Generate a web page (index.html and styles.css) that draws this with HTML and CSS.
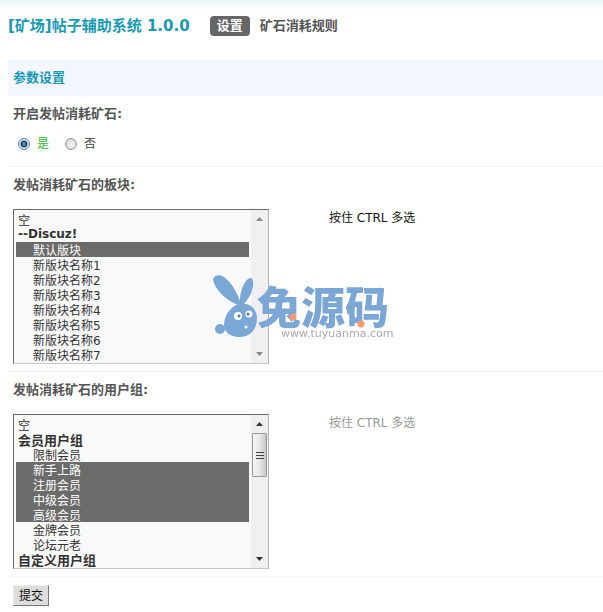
FILE: index.html
```html
<!DOCTYPE html>
<html lang="zh-CN">
<head>
<meta charset="utf-8">
<meta name="viewport" content="width=device-width, initial-scale=1">
<title>[矿场]帖子辅助系统</title>
<link rel="stylesheet" href="styles.css">
</head>
<body>
<header class="topbar">
  <h1 class="topbar-title">[矿场]帖子辅助系统 1.0.0</h1>
  <nav class="tabs">
    <a class="tab tab-current" href="#settings">设置</a>
    <a class="tab" href="#rules">矿石消耗规则</a>
  </nav>
</header>
<main id="settings">
  <h2 class="section-title">参数设置</h2>
  <form>
    <fieldset class="row">
      <legend class="row-title">开启发帖消耗矿石:</legend>
      <div class="radios">
        <label class="radio"><input type="radio" name="enabled" value="1" checked><span>是</span></label>
        <label class="radio"><input type="radio" name="enabled" value="0"><span>否</span></label>
      </div>
    </fieldset>
    <div class="row">
      <label class="row-title" for="forums">发帖消耗矿石的板块:</label>
      <div class="field">
        <div class="listbox">
          <select id="forums" multiple size="10">
            <option>空</option>
            <optgroup label="--Discuz!">
              <option selected>默认版块</option>
              <option>新版块名称1</option>
              <option>新版块名称2</option>
              <option>新版块名称3</option>
              <option>新版块名称4</option>
              <option>新版块名称5</option>
              <option>新版块名称6</option>
              <option>新版块名称7</option>
            </optgroup>
          </select>
          <div class="scrollbar scrollbar-idle" aria-hidden="true">
            <svg class="arrow" viewBox="0 0 7 4"><path d="M0 4 3.500 0 7 4z"/></svg>
            <svg class="arrow arrow-down" viewBox="0 0 7 4"><path d="M0 0h7L3.500 4z"/></svg>
          </div>
        </div>
        <p class="hint hint-active">按住 CTRL 多选</p>
      </div>
    </div>
    <div class="row">
      <label class="row-title" for="groups">发帖消耗矿石的用户组:</label>
      <div class="field">
        <div class="listbox">
          <select id="groups" class="cjk-groups" multiple size="10">
            <option>空</option>
            <optgroup label="会员用户组">
              <option>限制会员</option>
              <option selected>新手上路</option>
              <option selected>注册会员</option>
              <option selected>中级会员</option>
              <option selected>高级会员</option>
              <option>金牌会员</option>
              <option>论坛元老</option>
            </optgroup>
            <optgroup label="自定义用户组"></optgroup>
          </select>
          <div class="scrollbar" aria-hidden="true">
            <svg class="arrow" viewBox="0 0 7 4"><path d="M0 4 3.500 0 7 4z"/></svg>
            <div class="thumb"><i></i><i></i><i></i></div>
            <svg class="arrow arrow-down" viewBox="0 0 7 4"><path d="M0 0h7L3.500 4z"/></svg>
          </div>
        </div>
        <p class="hint">按住 CTRL 多选</p>
      </div>
    </div>
    <div class="actions"><button class="submit" type="submit">提交</button></div>
  </form>
</main>
<svg class="watermark" viewBox="0 0 182 64" role="img" aria-label="兔源码 www.tuyuanma.com">
  <g fill="#7ba7d7">
    <path d="M27 31C17 27 6 18 3 9C0 2 7-1 13 3C21 9 27 20 30 30z"/>
    <path d="M29 31C28 20 32 9 37 5C41 2 43 6 42 12C41 20 36 27 32 31z"/>
    <path d="M29 30C40 28 46 36 46 44C46 56 39 63 28 63C19 63 13 58 13 51C13 42 19 32 29 30z"/>
    <circle cx="9" cy="55" r="5"/>
    <text class="mark-name" x="46" y="50">兔源码</text>
  </g>
  <g fill="#fff"><circle cx="27" cy="42" r="4"/><circle cx="38" cy="40" r="3.500"/><circle cx="35" cy="53" r="1.500"/></g>
  <g fill="#54779f"><circle cx="28" cy="42" r="1.500"/><circle cx="37" cy="40" r="1.500"/></g>
  <g fill="#fa9a6c"><circle cx="82" cy="43" r="3.500"/><circle cx="150" cy="50" r="3.500"/></g>
  <text class="mark-url" x="70" y="63">www.tuyuanma.com</text>
</svg>
</body>
</html>
```
FILE: styles.css
```css
* { box-sizing: border-box; }

body {
  margin: 0;
  padding: 0 0 0 8px;
  min-height: 100vh;
  background: linear-gradient(#e8f4f9, #fff 10px) no-repeat #fff;
  color: #444;
  font: 12px/18px "DejaVu Sans", "Noto Sans CJK SC", sans-serif;
}

.topbar {
  display: flex;
  align-items: center;
  gap: 20px;
  height: 60px;
  padding-bottom: 8px;
}

.topbar-title {
  margin: 0;
  color: #1899b5;
  font-size: 15px;
  line-height: 20px;
}

.tabs { display: flex; gap: 10px; }

.tab {
  color: #555;
  font-size: 13px;
  font-weight: bold;
  line-height: 20px;
  text-decoration: none;
}

.tab-current {
  padding: 0 7px;
  border-radius: 4px;
  background: #666;
  color: #fff;
}

.section-title {
  margin: 0;
  padding-left: 5px;
  background: #f1f7fc;
  color: #1899b5;
  font-size: 13px;
  line-height: 36px;
}

.row {
  margin: 0;
  padding: 0 0 7px 5px;
  border: 0;
  border-bottom: 1px solid #f1f4f5;
}

.row-title {
  display: block;
  padding: 0;
  color: #555;
  font-size: 13px;
  font-weight: bold;
  line-height: 36px;
}

.radios {
  display: flex;
  gap: 16px;
  padding: 3px 0 6px 5px;
}

.radio { display: flex; align-items: center; gap: 7px; }

.radio input {
  appearance: none;
  width: 12px;
  height: 12px;
  margin: 0;
  border: 1px solid #999;
  border-radius: 50%;
  background: radial-gradient(circle at 60% 60%, #f4f4f4, #ccc);
}

.radio input:checked {
  border-color: #5d7d9c;
  background: radial-gradient(circle, #6fa9d8 0, #173f6d 3px, #e4eff7 4px);
}

.radio input:checked + span { color: #2eb82e; }

.field {
  display: flex;
  align-items: flex-start;
  gap: 60px;
  padding-top: 6px;
}

.listbox {
  display: flex;
  width: 256px;
  border: 1px solid #696969;
  border-right-color: #b5b5b5;
  border-bottom-color: #c8c8c8;
  background: #f9f9f9;
}

select {
  flex: 1;
  min-width: 0;
  height: 153px;
  padding: 2px;
  border: 0;
  border-radius: 0;
  outline: 0;
  background: transparent;
  color: #333;
  font: inherit;
  line-height: 15px;
  overflow: hidden;
  scrollbar-width: none;
}

option {
  display: flex;
  align-items: center;
  height: 15px;
  min-height: 15px;
  padding: 0 2px;
  line-height: 15px;
}

optgroup { font-weight: bold; line-height: 15px; }
optgroup option { padding-left: 17px; font-weight: normal; }

/* CJK labels have taller line boxes; pull them back to the 15px row rhythm */
.cjk-groups optgroup { margin-top: -2px; font-size: 13px; }
.cjk-groups option { font-size: 12px; }
.cjk-groups optgroup option:first-child { margin-top: -3px; }

option:checked {
  background: #6b6b6b linear-gradient(#6b6b6b, #6b6b6b);
  color: #fff;
}

.scrollbar {
  display: flex;
  flex-direction: column;
  align-items: center;
  width: 17px;
  padding-top: 7px;
  padding-bottom: 7px;
  background: #f0f0f0;
}

.arrow { width: 7px; height: 4px; fill: #333; }
.scrollbar-idle .arrow { fill: #888; }
.arrow-down { margin-top: auto; }

.thumb {
  display: flex;
  flex-direction: column;
  align-items: center;
  justify-content: center;
  gap: 2px;
  width: 15px;
  height: 44px;
  margin-top: 7px;
  border: 1px solid #979797;
  border-radius: 1px;
  background: linear-gradient(90deg, #f5f5f5, #e8e8e8 50%, #c8c8c8);
}

.thumb i { width: 8px; height: 1px; background: #444; }

.hint { margin: 0; color: #999; }
.hint-active { color: #111; }

.actions { padding: 8px 5px; }

.submit {
  height: 21px;
  padding: 0 5px;
  border: 1px solid;
  border-color: #eee #777 #777 #eee;
  background: #ddd;
  color: #111;
  font: inherit;
  line-height: 18px;
}

.watermark {
  position: fixed;
  inset: 0;
  width: 182px;
  height: 64px;
  margin: auto;
  overflow: visible;
  pointer-events: none;
}

.mark-name { font: 900 44px "Noto Sans CJK SC", sans-serif; }
.mark-url { fill: #aaa; font: 11px "DejaVu Sans", sans-serif; }
```
